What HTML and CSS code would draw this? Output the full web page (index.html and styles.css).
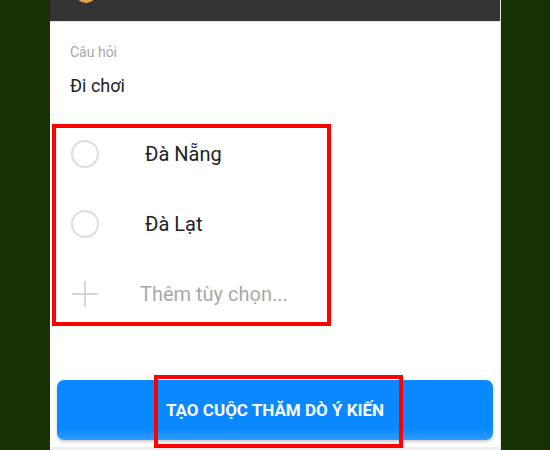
FILE: index.html
```html
<!DOCTYPE html>
<html lang="vi">
<head>
  <meta charset="UTF-8">
  <title>Tạo cuộc thăm dò ý kiến</title>
  <link rel="stylesheet" href="styles.css">
</head>
<body>

  <div class="screen">
    <div class="top-bar">
      <span class="avatar"></span>
    </div>

    <div class="question">
      <div class="label">Câu hỏi</div>
      <div class="question-text">Đi chơi</div>
    </div>

    <!-- Options (highlighted) -->
    <div class="options highlight">
      <div class="option">
        <span class="radio"></span>
        <span class="option-text">Đà Nẵng</span>
      </div>
      <div class="option">
        <span class="radio"></span>
        <span class="option-text">Đà Lạt</span>
      </div>
      <div class="option add-option">
        <span class="plus"></span>
        <span class="option-text">Thêm tùy chọn...</span>
      </div>
    </div>

    <div class="button-wrap">
      <button class="create-button">TẠO CUỘC THĂM DÒ Ý KIẾN</button>
      <span class="button-highlight"></span>
    </div>

    <div class="bottom-strip"></div>
  </div>

</body>
</html>
```

FILE: styles.css
```css
body {
  margin: 0;
  background-color: #173102;
  font-family: Roboto, "Noto Sans", Arial, sans-serif;
  height: 450px;
  overflow: hidden;
}
.screen {
  width: 450px;
  height: 450px;
  margin-left: 50px;
  background: white;
  border-right: 1px solid #e6e6e6;
  overflow: hidden;
}
.top-bar {
  position: relative;
  height: 21px;
  background-color: #333333;
  border-bottom: 1px solid #e2e2e2;
  overflow: hidden;
}
.avatar {
  position: absolute;
  left: 25px;
  top: -19px;
  width: 22px;
  height: 22px;
  border-radius: 50%;
  background: #e8a050;
}
.question {
  padding: 20px 20px 0 20px;
}
.label {
  font-size: 14px;
  color: #a8a8a8;
  line-height: 20px;
}
.question-text {
  margin-top: 12px;
  font-size: 18px;
  color: #222;
  line-height: 24px;
}
.options {
  margin: 26px 0 0 2px;
  width: 271px;
  padding: 6px 0 8px 0;
  display: flex;
  flex-direction: column;
  gap: 30px;
}
.highlight {
  border: 4px solid #ff0000;
}
.option {
  display: flex;
  align-items: center;
  height: 40px;
  padding-left: 15px;
}
.radio {
  width: 24px;
  height: 24px;
  border: 2px solid #dcdde1;
  border-radius: 50%;
  flex-shrink: 0;
}
.option-text {
  margin-left: 46px;
  font-size: 20px;
  color: #222;
}
.add-option .option-text {
  margin-left: 41px;
  color: #a8a8a8;
}
.plus {
  position: relative;
  width: 28px;
  height: 28px;
  flex-shrink: 0;
}
.plus::before,
.plus::after {
  content: "";
  position: absolute;
  background: #d6d6d6;
}
.plus::before {
  left: 1px;
  right: 1px;
  top: 13px;
  height: 2px;
}
.plus::after {
  top: 1px;
  bottom: 1px;
  left: 13px;
  width: 2px;
}
.button-wrap {
  position: relative;
  margin: 54px 0 0 7px;
  width: 436px;
}
.create-button {
  display: block;
  width: 100%;
  height: 60px;
  border: none;
  border-radius: 7px;
  background: linear-gradient(#0a88ff 80%, #2f9bff);
  box-shadow: 0px 2px 3px rgba(0, 0, 0, 0.2);
  color: white;
  font-family: Roboto, Arial, sans-serif;
  font-size: 17px;
  font-weight: bold;
  padding: 0;
}
.button-highlight {
  position: absolute;
  left: 97px;
  top: -5px;
  width: 241px;
  height: 65px;
  border: 4px solid #ff0000;
}
.bottom-strip {
  margin-top: 7px;
  height: 10px;
  background: #eeeeee;
}
```
